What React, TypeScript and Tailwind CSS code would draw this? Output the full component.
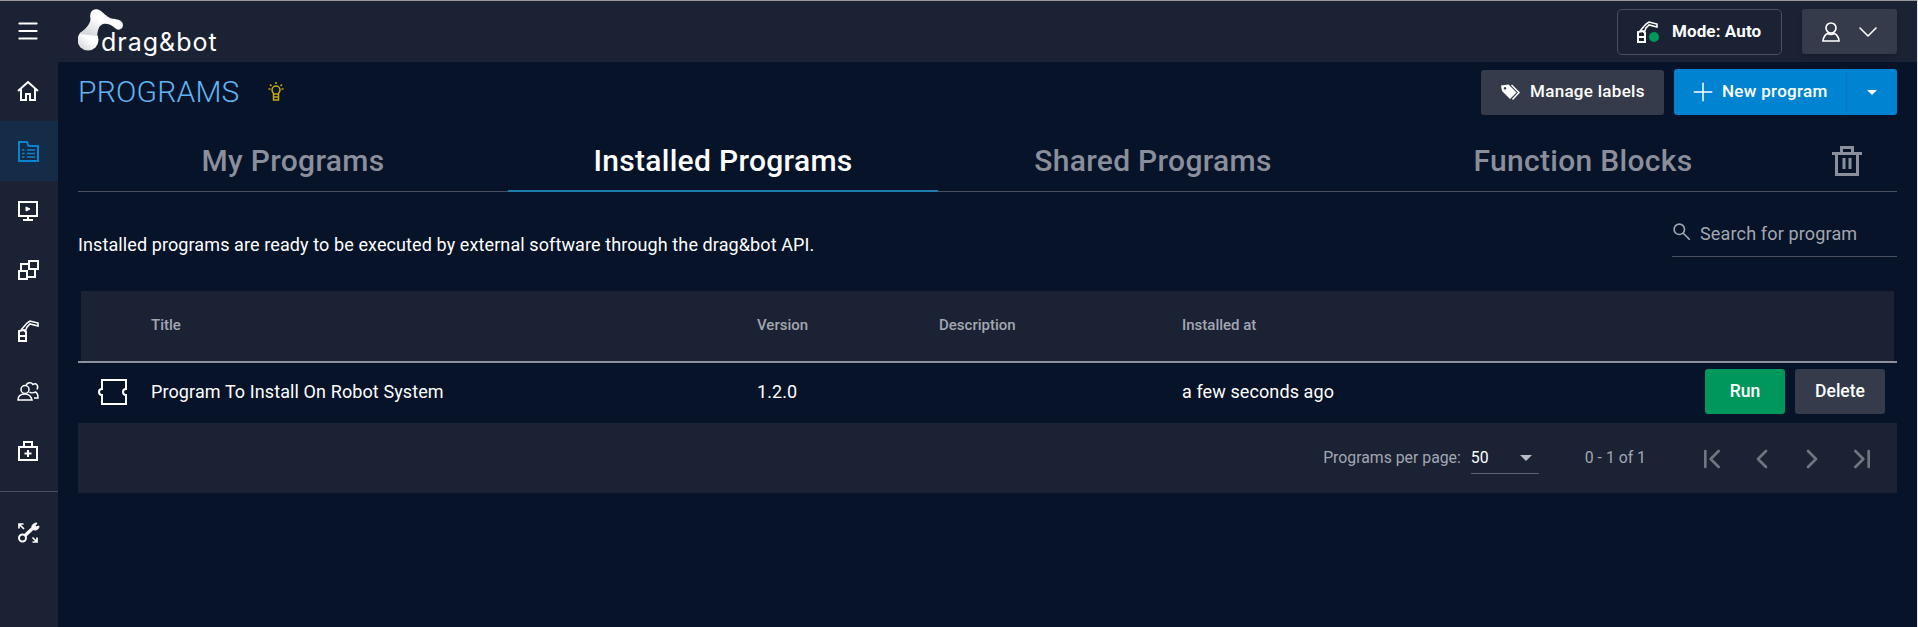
import { ChevronDown, ChevronLeft, ChevronRight, Plus, Menu, ChevronFirst, ChevronLast } from "lucide-react";
import type { ReactNode } from "react";

const font = "font-['Roboto',sans-serif]";

function Icon({ size = 24, children }: { size?: number; children: ReactNode }) {
  return (
    <svg width={size} height={size} viewBox="0 0 24 24" fill="none" stroke="currentColor" strokeWidth={2} strokeLinejoin="miter">
      {children}
    </svg>
  );
}

function RobotArm({ size = 24 }: { size?: number }) {
  return (
    <Icon size={size}>
      <path d="M3 22V12l5-1 2 2v9z" />
      <path d="M3 17h7" />
      <path d="M5 11l6-7 3-2 8 2v3l-8-2-3 3-2 5" strokeWidth={1.600} />
    </Icon>
  );
}

const navItems: { key: string; active?: boolean; icon: ReactNode }[] = [
  { key: "menu", icon: <Menu size={26} strokeWidth={1.8} /> },
  {
    key: "home",
    icon: (
      <Icon>
        <path d="M2 12 12 3l10 9M5 10v11h5v-6h4v6h5V10" />
      </Icon>
    ),
  },
  {
    key: "programs",
    active: true,
    icon: (
      <Icon>
        <path d="M3 22V3h8l1.500 4H22v15z" />
        <path d="M6 11h2.500M11 11h8M6 14.500h2.500M11 14.500h8M6 18h2.500M11 18h8" strokeWidth={1.6} />
      </Icon>
    ),
  },
  {
    key: "monitor",
    icon: (
      <Icon>
        <path d="M3 3h18v14H3zM12 17v3M7 21h10" />
        <path d="M10 8l4 2-4 2z" fill="currentColor" strokeWidth={1} />
      </Icon>
    ),
  },
  {
    key: "blocks",
    icon: (
      <Icon>
        <path d="M3 12h8v8H3zM13 2h9v8h-9z" />
        <path d="M5 12V5h8M19 10v8h-8" />
      </Icon>
    ),
  },
  { key: "robot", icon: <RobotArm /> },
  {
    key: "people",
    icon: (
      <Icon>
        <circle cx="9" cy="10.500" r="4" strokeWidth={1.5} />
        <path d="M2 21c0-4 3-6 7-6s6 2 7 6z" strokeWidth={1.5} />
        <path d="M10 6.500c1-3 5-4 7-1 3-2 6 1 4 5M13.500 13c1 1 4 1 6 0 2 1 2.500 4 2.500 6h-4" strokeWidth={1.5} />
      </Icon>
    ),
  },
  {
    key: "medkit",
    icon: (
      <Icon>
        <path d="M3 8h18v13H3zM8 8V3h8v5" />
        <path d="M12 11v7M8.500 14.500h7" />
      </Icon>
    ),
  },
];

function Sidebar() {
  return (
    <aside className="flex w-[58px] shrink-0 flex-col bg-[#1a2234] text-white">
      {navItems.map((item) => (
        <div
          key={item.key}
          className={
            item.active
              ? "flex h-[60px] items-center justify-center bg-[#152c49] pr-[2px] text-[#0a84cc]"
              : "flex h-[60px] items-center justify-center pr-[2px]"
          }
        >
          {item.icon}
        </div>
      ))}
      <div className="mt-[10px] h-px bg-[#4a5060]" />
      <div className="flex h-[82px] items-center justify-center pr-[2px]">
        <Icon>
          <path d="M8 8 3 3M3 7.500V3h4.500M16.500 16.500 21 21M21 16.500V21h-4.500" strokeWidth={1.7} />
          <circle cx="6.500" cy="17" r="3.500" strokeWidth={2} />
          <path d="M9 14.500 16 8" strokeWidth={3.200} />
          <path d="M16 8c-1-3 1-6 5-6l-2 3 1 1 3-1c0 4-4 5-7 3z" fill="currentColor" strokeWidth={1} />
        </Icon>
      </div>
    </aside>
  );
}

function Logo() {
  return (
    <div className="relative h-[60px] w-[170px]">
      <svg width="60" height="56" viewBox="78 0 60 56" className="absolute left-0 top-0">
        <defs>
          <linearGradient id="logoGrad" x1="0" y1="1" x2="0.5" y2="0.4">
            <stop offset="0" stopColor="#c9ccd3" />
            <stop offset="1" stopColor="#ffffff" />
          </linearGradient>
        </defs>
        <circle cx="88" cy="38" r="10.500" fill="url(#logoGrad)" />
        <path d="M80 32C84 27 90 24 90.500 17C89.500 12 91 7.500 96 7.300C101 7 104 13 110 16C114 17.500 120 16.500 122.500 21C124.500 26 119 30 115 26C111 22 106 21 103 22C98 24 98 29 97 34Z" fill="url(#logoGrad)" />
      </svg>
      <span className="absolute left-[23px] top-[24px] font-['Inter',sans-serif] text-[25px] leading-[32px] tracking-[1px] text-white">
        drag&amp;bot
      </span>
    </div>
  );
}

function Header() {
  return (
    <header className="flex h-[61px] items-center justify-between bg-[#1a2234] pl-[20px] pr-[20px]">
      <Logo />
      <div className="flex items-center gap-[20px]">
        <div className="flex h-[46px] w-[165px] items-center gap-[13px] rounded-[5px] border border-[#4a5060] pl-[17px] text-[17px] font-bold tracking-[0.1px] text-white">
          <span className="relative flex">
            <RobotArm size={24} />
            <span className="absolute bottom-[2px] right-0 h-[10px] w-[10px] rounded-full bg-[#00975c]" />
          </span>
          Mode: Auto
        </div>
        <div className="flex h-[45px] w-[95px] items-center gap-[10px] rounded-[3px] bg-[#353b4a] pl-[18px] text-white shadow-md">
          <svg width="22" height="22" viewBox="0 0 22 22" fill="none" stroke="currentColor" strokeWidth="1.700">
            <circle cx="11" cy="7" r="5" />
            <path d="M3 20c0-4 3-7 4.500-7.500 2 1 5 1 7 0C16 13 19 16 19 20z" />
          </svg>
          <ChevronDown size={32} strokeWidth={1.2} />
        </div>
      </div>
    </header>
  );
}

function TitleRow() {
  return (
    <div className="flex h-[60px] items-center justify-between">
      <div className="flex items-center gap-[26px]">
        <h1 className="text-[30px] font-light leading-none tracking-[0.2px] text-[#60b4f5]">PROGRAMS</h1>
        <svg width="20" height="20" viewBox="0 0 20 20" fill="none" stroke="#c9a90f" strokeWidth="1.500">
          <path d="M6 8a4 4 0 1 1 8 0c0 2-1.500 3-1.500 4h-5C7.500 11 6 10 6 8zM7.500 12v6h5v-6M7.500 15h5" />
          <path d="M10 0v2M2.500 7h2M15.500 7h2M4 2.500l1.500 1.500M16 2.500 14.500 4" />
        </svg>
      </div>
      <div className="flex items-center gap-[10px]">
        <button className="flex h-[45px] w-[183px] items-center gap-[10px] rounded-[3px] bg-[#353b4a] pl-[20px] text-[17px] font-medium tracking-[0.3px] text-white">
          <svg width="19" height="17" viewBox="0 0 19 17">
            <path d="M0 1.500 7.500.5 15.500 8.500 9 15 1 7zM4 3a1.300 1.300 0 1 0 .1 0z" fill="white" fillRule="evenodd" />
            <path d="M10.500 1 18 8.500 11.500 15.500" fill="none" stroke="white" strokeWidth="1.500" />
          </svg>
          Manage labels
        </button>
        <div className="flex h-[46px] w-[223px] rounded-[3px] bg-[#0084d1] text-white">
          <button className="flex flex-1 items-center gap-[4px] border-r border-[#0a78bb] pl-[14px] text-[17px] font-medium tracking-[0.3px]">
            <Plus size={30} strokeWidth={1.2} />
            New program
          </button>
          <div className="flex w-[50px] items-center justify-center">
            <span className="h-0 w-0 border-x-[5px] border-t-[5px] border-x-transparent border-t-white" />
          </div>
        </div>
      </div>
    </div>
  );
}

const tabs = ["My Programs", "Installed Programs", "Shared Programs", "Function Blocks"];

function Tabs() {
  return (
    <div className="flex h-[70px] border-b border-[#4a5060]">
      {tabs.map((tab) => (
        <div
          key={tab}
          className={
            tab === "Installed Programs"
              ? "-mb-px flex w-[430px] items-center justify-center border-b-2 border-[#1d7cab] pt-[8px] text-[30px] font-medium tracking-[0.3px] text-white"
              : "flex w-[430px] items-center justify-center pt-[8px] text-[30px] font-medium tracking-[0.3px] text-[#8a8f9b]"
          }
        >
          {tab}
        </div>
      ))}
      <div className="flex flex-1 items-center justify-center pt-[9px] pr-[2px] text-[#8a8f9b]">
        <svg width="30" height="30" viewBox="0 0 30 30" fill="none" stroke="currentColor" strokeWidth="3">
          <path d="M0 7.500h30M9.500 7.500V1.500h11v6M4.500 7.500v21h21v-21" />
          <path d="M12 12v11M18 12v11" />
        </svg>
      </div>
    </div>
  );
}

const tableCols = "grid grid-cols-[70px_606px_182px_243px_1fr] items-center";

function ProgramsTable() {
  return (
    <div>
      <div className={`${tableCols} mx-[3px] h-[70px] bg-[#1a2234] pb-[2px] text-[15px] font-medium text-[#a3a7b1]`}>
        <span />
        <span>Title</span>
        <span>Version</span>
        <span>Description</span>
        <span>Installed at</span>
      </div>
      <div className="h-[2px] bg-[#8d919c]" />
      <div className={`${tableCols} h-[60px] pb-[3px] pl-[3px] text-[18px] tracking-[0.1px] text-white`}>
        <div className="flex pl-[13px]">
          <svg width="34" height="26" viewBox="-2 0 34 26" fill="none" stroke="currentColor" strokeWidth="2">
            <path d="M6 1h24v9a3 3 0 0 0 0 6v9H6v-9a3 3 0 0 1 0-6z" />
          </svg>
        </div>
        <span>Program To Install On Robot System</span>
        <span>1.2.0</span>
        <span />
        <div className="flex items-center justify-between pr-[12px]">
          <span>a few seconds ago</span>
          <div className="flex gap-[10px] text-[17.500px] font-medium tracking-normal">
            <button className="h-[45px] w-[80px] rounded-[3px] bg-[#00975c]">Run</button>
            <button className="h-[45px] w-[90px] rounded-[3px] bg-[#353b4a]">Delete</button>
          </div>
        </div>
      </div>
      <div className="flex h-[70px] items-center justify-end bg-[#1a2234] pr-[19px] text-[15.800px] text-[#a3a7b1]">
        <span>Programs per page:</span>
        <div className="ml-[10px] flex h-[32px] w-[68px] items-center justify-between border-b border-[#5a5f6c] pr-[7px] text-white">
          <span>50</span>
          <span className="h-0 w-0 border-x-[6px] border-t-[6px] border-x-transparent border-t-[#b9bcc4]" />
        </div>
        <span className="ml-[46px]">0 - 1 of 1</span>
        <div className="ml-[50px] flex items-center gap-[18px] pt-[1px] text-[#71757f]">
          <ChevronFirst size={32} strokeWidth={2} />
          <ChevronLeft size={32} strokeWidth={2} />
          <ChevronRight size={32} strokeWidth={2} />
          <ChevronLast size={32} strokeWidth={2} />
        </div>
      </div>
    </div>
  );
}

export default function App() {
  return (
    <div className={`${font} flex min-h-[627px] flex-col border-r border-t border-r-[#e6e6e6] border-t-[#9a9a9a] bg-[#061328]`}>
      <div className="flex flex-1">
        <Sidebar />
        <div className="flex min-w-0 flex-1 flex-col">
          <Header />
          <main className="pl-[20px] pr-[20px]">
            <TitleRow />
            <Tabs />
            <div className="flex h-[99px] items-center justify-between pt-[6px]">
              <p className="text-[18px] tracking-[0.1px] text-white">
                Installed programs are ready to be executed by external software through the drag&amp;bot API.
              </p>
              <div className="mt-[-22px] flex h-[46px] w-[225px] items-center gap-[5px] border-b border-[#4a5060] text-[18px] tracking-[0.15px] text-[#a3a7b1]">
                <svg width="23" height="23" viewBox="0 0 22 22" fill="none" stroke="currentColor" strokeWidth="1.500">
                  <circle cx="7" cy="7" r="5" />
                  <path d="M10.500 10.500 17 17" />
                </svg>
                Search for program
              </div>
            </div>
            <ProgramsTable />
          </main>
        </div>
      </div>
    </div>
  );
}
